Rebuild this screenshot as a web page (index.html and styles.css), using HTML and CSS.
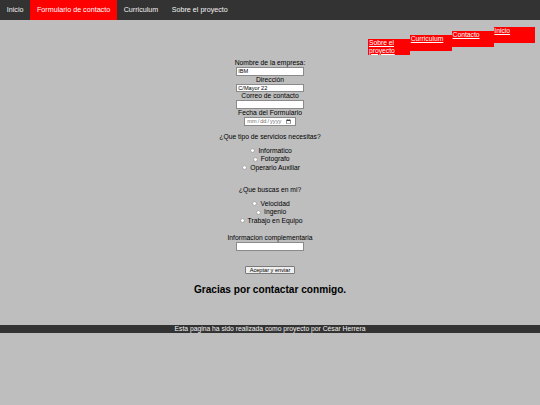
FILE: index.html
```html
<!DOCTYPE html>
<html lang="es">
<head>
<meta charset="utf-8">
<title>Formulario de contacto</title>
<link rel="stylesheet" href="styles.css">
</head>
<body>
<nav class="topnav">
  <a href="#">Inicio</a>
  <a class="active" href="#">Formulario de contacto</a>
  <a href="#">Curriculum</a>
  <a href="#">Sobre el proyecto</a>
</nav>

<ul class="side-links">
  <li class="step-4"><a href="#">Sobre el proyecto</a></li>
  <li class="step-3"><a href="#">Curriculum</a></li>
  <li class="step-2"><a href="#">Contacto</a></li>
  <li class="step-1"><a href="#">Inicio</a></li>
</ul>

<form class="contact">
  <div class="field">
    <label for="empresa">Nombre de la empresa:</label>
    <input id="empresa" type="text" value="IBM">
  </div>
  <div class="field">
    <label for="direccion">Dirección</label>
    <input id="direccion" type="text" value="C/Mayor 22">
  </div>
  <div class="field">
    <label for="correo">Correo de contacto</label>
    <input id="correo" type="email">
  </div>
  <div class="field">
    <label for="fecha">Fecha del Formulario</label>
    <input id="fecha" class="date" type="date">
  </div>

  <p class="question">¿Que tipo de servicios necesitas?</p>
  <div class="options options-first">
    <div class="opt"><input type="radio" name="servicio" id="s1"> <label for="s1">Informatico</label></div>
    <div class="opt"><input type="radio" name="servicio" id="s2"> <label for="s2">Fotografo</label></div>
    <div class="opt"><input type="radio" name="servicio" id="s3"> <label for="s3">Operario Auxiliar</label></div>
  </div>

  <p class="question">¿Que buscas en mi?</p>
  <div class="options options-second">
    <div class="opt"><input type="radio" name="busca" id="b1"> <label for="b1">Velocidad</label></div>
    <div class="opt"><input type="radio" name="busca" id="b2"> <label for="b2">Ingenio</label></div>
    <div class="opt"><input type="radio" name="busca" id="b3"> <label for="b3">Trabajo en Equipo</label></div>
  </div>

  <div class="field">
    <label for="info">Informacion complementaria</label>
    <input id="info" type="text">
  </div>

  <div class="actions">
    <button type="button">Aceptar y enviar</button>
  </div>

  <h2 class="thanks">Gracias por contactar conmigo.</h2>
</form>

<footer class="footer">Esta pagina ha sido realizada como proyecto por César Herrera</footer>
</body>
</html>
```

FILE: styles.css
```css
html {
  background: #bebebe;
}

body {
  margin: 0;
  font-family: "Liberation Sans", Arial, sans-serif;
  font-size: 6.75px;
  line-height: 7.76px;
  color: #000;
}

/* Top navigation */
.topnav {
  display: flex;
  background: #333;
}

.topnav a {
  display: block;
  padding: 0 6.75px;
  font-size: 7.17px;
  line-height: 20px;
  color: #f2f2f2;
  text-decoration: none;
}

.topnav a.active {
  background: #f00;
  color: #fff;
}

/* Stepped red links */
.side-links {
  display: flex;
  justify-content: flex-end;
  align-items: flex-start;
  list-style: none;
  margin: 6.75px 0 0;
  padding: 0 4.7px 0 0;
}

.side-links li {
  width: 41.8px;
  height: 16px;
  background: #f00;
  padding-left: 0.8px;
  box-sizing: border-box;
}

.side-links a {
  color: #fff;
  text-decoration: underline;
  line-height: 7.76px;
}

.side-links .step-1 { margin-top: 0; }
.side-links .step-2 { margin-top: 4px; }
.side-links .step-3 { margin-top: 8px; }
.side-links .step-4 { margin-top: 12px; }

/* Form */
.contact {
  margin-top: 4.4px;
  text-align: center;
}

.field label {
  display: block;
}

.field input {
  display: block;
  margin: 0 auto;
  width: 67.5px;
  height: 8.9px;
  box-sizing: border-box;
  font-family: "Liberation Sans", Arial, sans-serif;
  font-size: 5.63px;
  line-height: 6px;
  padding: 0 1px;
  border: 0.5px solid #8a8a8a;
  background: #fff;
  color: #000;
  text-align: left;
}

.field input.date {
  width: 51.5px;
  color: #6f6f6f;
}

.question {
  margin: 6.75px 0;
}

.options-first {
  margin-bottom: 13.5px;
}

.options-second {
  margin-bottom: 9.2px;
}

.opt {
  height: 8.35px;
  line-height: 8.35px;
}

.opt input {
  appearance: none;
  display: inline-block;
  width: 5px;
  height: 5px;
  margin: 0 1.3px 0 2.1px;
  box-sizing: border-box;
  border: 0.5px solid #a8a8a8;
  border-radius: 50%;
  background: #fff;
  vertical-align: -0.3px;
}

.actions {
  margin-top: 14.7px;
}

.actions button {
  height: 8.5px;
  box-sizing: border-box;
  font-family: "Liberation Sans", Arial, sans-serif;
  font-size: 5.63px;
  line-height: 6px;
  padding: 0 3.4px;
  border: 0.5px solid #7a7a7a;
  border-radius: 1px;
  background: #efefef;
  color: #000;
}

.thanks {
  font-size: 10.125px;
  line-height: 11.64px;
  margin: 9.4px 0 29.8px;
}

.footer {
  background: #333;
  color: #f2f2f2;
  text-align: center;
  line-height: 8.3px;
}
```
